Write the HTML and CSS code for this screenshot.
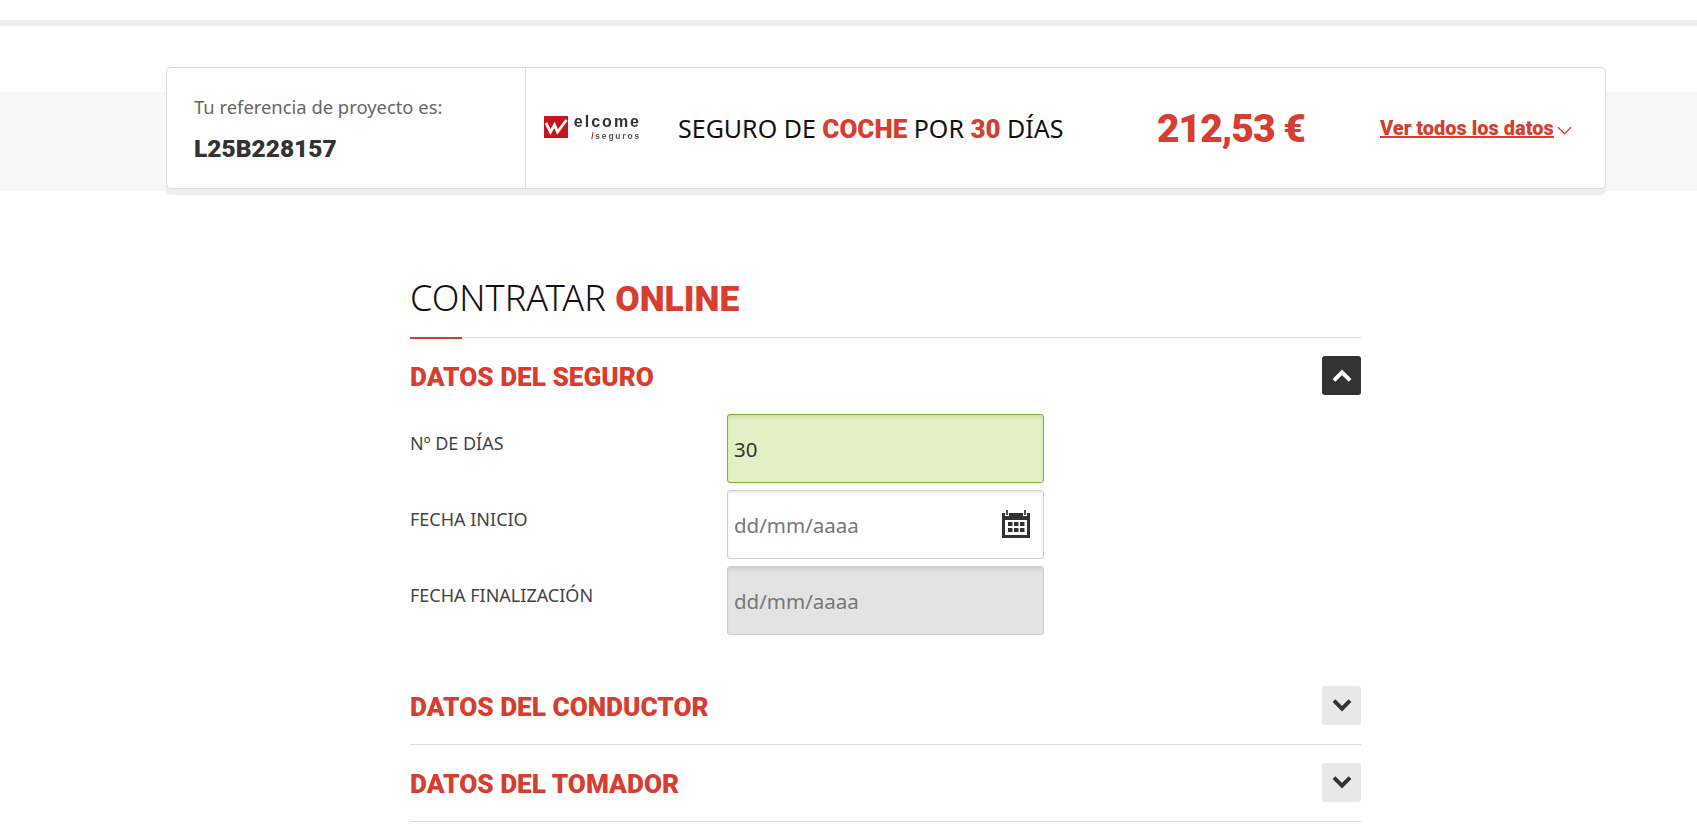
FILE: index.html
```html
<!DOCTYPE html>
<html lang="es">
<head>
<meta charset="utf-8">
<title>Contratar online</title>
<link rel="stylesheet" href="styles.css">
</head>
<body>
<div class="topbar"></div>
<div class="summary-zone">
  <div class="band"></div>
  <div class="card">
    <div class="ref">
      <p class="ref-label">Tu referencia de proyecto es:</p>
      <p class="ref-code">L25B228157</p>
    </div>
    <div class="info">
      <div class="logo">
        <svg class="logo-mark" viewBox="0 0 24 22" width="24" height="22"><rect width="24" height="22" fill="#c4161c"/><path d="M2 7l4.500 9 4-7 3 7 9-12" fill="none" stroke="#fff" stroke-width="2.800"/></svg>
        <div class="logo-text"><span class="logo-main">elcome</span><span class="logo-sub"><b>/</b>seguros</span></div>
      </div>
      <p class="product">SEGURO DE <b>COCHE</b> POR <b>30</b> DÍAS</p>
      <p class="price">212,53 €</p>
      <a class="more" href="#"><span>Ver todos los datos</span><svg viewBox="0 0 16 9" width="15" height="9"><path d="M1 1l7 7 7-7" fill="none" stroke="#d63e30" stroke-width="1.400"/></svg></a>
    </div>
  </div>
</div>
<main class="main">
  <h1 class="title">CONTRATAR <b>ONLINE</b></h1>
  <div class="rule"></div>
  <section class="section open">
    <div class="sec-head">
      <h2>DATOS DEL SEGURO</h2>
      <button class="toggle dark" type="button"><svg viewBox="0 0 20 14" width="22" height="15"><path d="M2.500 11.500L10 4l7.500 7.500" fill="none" stroke="#fff" stroke-width="3.600"/></svg></button>
    </div>
    <div class="row">
      <label class="lab">Nº DE DÍAS</label>
      <input class="field ok" type="text" value="30">
    </div>
    <div class="row">
      <label class="lab">FECHA INICIO</label>
      <div class="field-wrap">
        <input class="field" type="text" placeholder="dd/mm/aaaa">
        <svg class="cal" viewBox="0 0 28 28" width="28" height="28"><path fill="#333" fill-rule="evenodd" d="M0 3h3v3h4V3h14v3h4V3h3v25H0zM3 10v15h22V10zM6 12h4.500v4H6zm6 0h4.500v4H12zm6 0h4.500v4H18zM6 18h4.500v4H6zm6 0h4.500v4H12zm6 0h4.500v4H18z"/><path fill="#555" d="M4 0h2v5H4zm18 0h2v5h-2z"/></svg>
      </div>
    </div>
    <div class="row">
      <label class="lab">FECHA FINALIZACIÓN</label>
      <input class="field off" type="text" placeholder="dd/mm/aaaa" disabled>
    </div>
  </section>
  <section class="section closed first">
    <div class="sec-head">
      <h2>DATOS DEL CONDUCTOR</h2>
      <button class="toggle" type="button"><svg viewBox="0 0 20 14" width="22" height="15"><path d="M2.500 2.500L10 10l7.500-7.500" fill="none" stroke="#333" stroke-width="3.600"/></svg></button>
    </div>
  </section>
  <section class="section closed">
    <div class="sec-head">
      <h2>DATOS DEL TOMADOR</h2>
      <button class="toggle" type="button"><svg viewBox="0 0 20 14" width="22" height="15"><path d="M2.500 2.500L10 10l7.500-7.500" fill="none" stroke="#333" stroke-width="3.600"/></svg></button>
    </div>
  </section>
</main>
</body>
</html>
```
FILE: styles.css
```css
* { box-sizing: border-box; }
html, body { margin: 0; padding: 0; background: #fff; overflow: hidden; height: 836px; }
body { font-family: "Noto Sans", "Open Sans", sans-serif; color: #333; }
p, h1, h2 { margin: 0; font-weight: 400; }
.topbar { height: 6px; margin-top: 20px; background: #eeeeee; }
.summary-zone { position: relative; margin-top: 41px; padding: 0 91px 0 166px; height: 128px; }
.band { position: absolute; left: 0; right: 0; top: 25px; height: 99px; background: #f7f7f7; }
.card { position: relative; display: flex; height: 122px; background: #fff; border: 1px solid #dcdcdc; border-radius: 5px; box-shadow: 0 6px 0 #eeeeee; }
.ref { width: 359px; padding: 27px 0 0 27px; border-right: 1px solid #dcdcdc; flex: none; }
.ref-label { font-size: 18.400px; line-height: 24px; color: #666; }
.ref-code { margin-top: 16px; font-family: Roboto, sans-serif; font-size: 24.500px; line-height: 28px; font-weight: 900; color: #333; }
.info { flex: 1; display: flex; align-items: center; padding-left: 18px; }
.logo { display: flex; align-items: center; width: 97px; flex: none; margin-top: -2px; filter: blur(0.4px); }
.logo-mark { flex: none; }
.logo-text { display: flex; flex-direction: column; align-items: flex-end; width: 73px; }
.logo-main { font-family: "Liberation Sans", sans-serif; font-size: 16px; line-height: normal; font-weight: 700; color: #333; letter-spacing: 2px; }
.logo-sub { font-family: "Liberation Sans", sans-serif; font-size: 8.500px; line-height: normal; color: #555; letter-spacing: 1.800px; font-weight: 700; }
.logo-sub b { color: #c4161c; }
.product { margin-left: 37px; width: 479px; font-size: 25px; line-height: 32px; color: #111; flex: none; white-space: nowrap; }
.product b { font-family: Roboto, sans-serif; color: #d63e30; font-weight: 900; font-size: 26px; }
.price { width: 223px; flex: none; padding-top: 2px; font-family: Roboto, sans-serif; font-size: 39px; line-height: 48px; font-weight: 900; letter-spacing: -1px; color: #d63e30; white-space: nowrap; }
.more { display: flex; align-items: center; font-family: Roboto, sans-serif; font-size: 20px; font-weight: 900; color: #d63e30; white-space: nowrap; }
.more span { text-decoration: underline; }
.more svg { margin-left: 3px; margin-top: 4px; }
.main { width: 951px; margin: 0 0 0 410px; padding-top: 81px; }
.title { font-size: 36px; font-weight: 300; line-height: 44px; color: #111; }
.title b { font-family: Roboto, sans-serif; color: #d63e30; font-weight: 900; font-size: 35.500px; }
.rule { height: 2px; margin-top: 16px; background: linear-gradient(to right, #d63e30 52px, transparent 52px), linear-gradient(#dcdcdc, #dcdcdc) 0 0 / 100% 1px no-repeat; }
.section { display: block; }
.sec-head { display: flex; align-items: center; justify-content: space-between; }
.open .sec-head { margin-top: 17px; height: 39px; margin-bottom: 19px; }
.closed .sec-head { height: 39px; }
.closed { border-bottom: 1px solid #dcdcdc; padding: 18px 0 0; height: 77px; }
.closed.first { margin-top: 51px; padding-top: 0; height: 59px; }
h2 { padding-top: 2px; font-family: Roboto, sans-serif; font-size: 26.200px; line-height: 30px; font-weight: 900; color: #d63e30; }
.toggle { width: 39px; height: 39px; padding: 0; border: 0; border-radius: 3px; background: #e8e8e8; display: flex; align-items: center; justify-content: center; }
.toggle.dark { background: #333; }
.row { display: flex; margin-bottom: 7px; }
.lab { width: 317px; flex: none; padding-top: 17px; font-size: 18px; line-height: 24px; color: #444; }
.field-wrap { position: relative; width: 317px; height: 69px; }
.field { display: block; width: 317px; height: 69px; padding: 0 6px; font: 400 20.500px "Noto Sans", sans-serif; color: #333; background: #fff; border: 1px solid #cfcfcf; border-radius: 3px; box-shadow: inset 0 4px 4px -2px rgba(0,0,0,.1); outline: 0; }
.field::placeholder { color: #777; opacity: 1; }
.field.ok { background: #e1f1c3; border-color: #7cb32c; }
.field.off { background: #e3e3e3; }
.cal { position: absolute; right: 14px; top: 20px; }
```
